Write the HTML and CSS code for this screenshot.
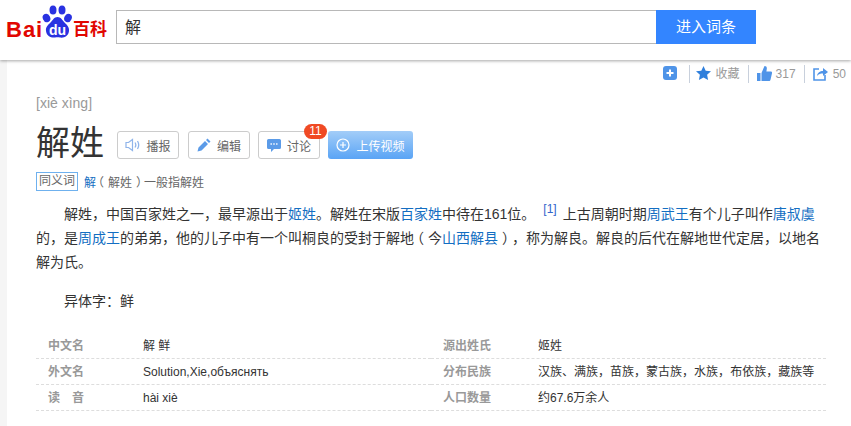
FILE: index.html
```html
<!DOCTYPE html>
<html lang="zh-CN">
<head>
  <meta charset="UTF-8">
  <title>解姓_百度百科</title>
  <link rel="stylesheet" href="styles.css">
</head>
<body>

<header class="top">
  <div class="logo">
    <span class="logo-bai">Bai</span>
    <span class="logo-paw">
      <svg width="32" height="34" viewBox="0 0 32 34">
        <ellipse cx="5.500" cy="13" rx="3.700" ry="4.300" fill="#2932e1" transform="rotate(-25 5.500 13)"/>
        <ellipse cx="12" cy="5" rx="3.500" ry="4.500" fill="#2932e1"/>
        <ellipse cx="21" cy="5" rx="3.500" ry="4.500" fill="#2932e1"/>
        <ellipse cx="27" cy="13" rx="3.700" ry="4.300" fill="#2932e1" transform="rotate(25 27 13)"/>
        <path d="M16.500 12c-3.500 0-4.500 3-7 5.500-2.500 2.500-5 4.500-4.500 8.500.5 5 5 7 9 6.500 2-.3 3.500-.3 5 0 4 .7 8.500-1.500 9-6.500.4-4-2-6-4.500-8.500-2.500-2.500-3.500-5.500-7-5.500z" fill="#2932e1"/>
      </svg>
      <span class="logo-du">du</span>
    </span>
    <span class="logo-baike">百科</span>
  </div>
  <form class="search">
    <div class="search-input">解</div>
    <div class="search-btn">进入词条</div>
  </form>
</header>

<div class="page">
  <main class="content">
    <div class="tools">
      <svg class="ico" width="14" height="14" viewBox="0 0 14 14"><rect width="14" height="14" rx="3" fill="#4f94e8"/><path d="M7 3.500v7M3.500 7h7" stroke="#fff" stroke-width="2"/></svg>
      <span class="sep sep-first"></span>
      <svg class="ico" width="15" height="14" viewBox="0 0 15 14"><path d="M7.500 0l2.200 4.700 5.300.6-3.900 3.500 1 5.200-4.600-2.600-4.600 2.600 1-5.200L0 5.300l5.300-.6z" fill="#2f7fdc"/></svg>
      <span class="tool-text">收藏</span>
      <span class="sep"></span>
      <svg class="ico ico-thumb" width="15" height="15" viewBox="0 0 15 15"><path d="M0 7h3.500v8H0zM4.500 7l3-7c1.700 0 2.500 1 2.300 2.700L9.400 5.500H14c1 0 1.200 1 1 1.800l-1.500 6.500c-.2.800-.7 1.200-1.500 1.200H4.500z" fill="#4f94e8"/></svg>
      <span class="tool-text">317</span>
      <span class="sep"></span>
      <svg class="ico" width="15" height="15" viewBox="0 0 15 15"><path d="M6 3H1v11h11V9" fill="none" stroke="#4f94e8" stroke-width="1.600"/><path d="M4 10c.5-3.500 3-5 6-5V2l5 4-5 4V7.500c-2.500 0-4.500.6-6 2.500z" fill="#4f94e8"/></svg>
      <span class="tool-text">50</span>
    </div>

    <div class="pinyin">[xiè xìng]</div>

    <div class="title-row">
      <h1>解姓</h1>
      <a class="btn">
        <svg width="15" height="14" viewBox="0 0 15 14"><path d="M1 4.500h2.500L7.500 1.500v11l-4-3H1z" fill="none" stroke="#8fb4ea" stroke-width="1.200"/><path d="M10 4.500c1 1.500 1 3.500 0 5M12.500 3c1.500 2.500 1.500 5.500 0 8" fill="none" stroke="#8fb4ea" stroke-width="1.300"/></svg>
        播报
      </a>
      <a class="btn">
        <svg width="14" height="14" viewBox="0 0 14 14"><path d="M0.500 13.500l1-4 6.500-6.500 3 3L4.500 12.500zM9 2l1.500-1.500 3 3L12 5z" fill="#5b9be8"/></svg>
        编辑
      </a>
      <a class="btn">
        <svg width="14" height="14" viewBox="0 0 14 14"><path d="M1.500 1h11A1.500 1.500 0 0 1 14 2.500v7a1.500 1.500 0 0 1-1.500 1.500H7l-3 3v-3H1.500A1.500 1.500 0 0 1 0 9.500v-7A1.500 1.500 0 0 1 1.500 1z" fill="#5b9be8"/><path d="M3.500 6h1.400M6.300 6h1.400M9.100 6h1.400" stroke="#fff" stroke-width="1.400"/></svg>
        讨论
        <span class="badge">11</span>
      </a>
      <a class="btn-upload">
        <svg width="14" height="14" viewBox="0 0 14 14"><circle cx="7" cy="7" r="6" fill="none" stroke="#fff" stroke-width="1.200"/><path d="M7 4v6M4 7h6" stroke="#fff" stroke-width="1.200"/></svg>
        上传视频
      </a>
    </div>

    <div class="synonym">
      <span class="syn-tag">同义词</span>
      <span class="syn-text"><a>解</a><span class="pl">（</span>解姓<span class="pr">）</span>一般指解姓</span>
    </div>

    <p class="para">解姓<span class="pc">，</span>中国百家姓之一<span class="pc">，</span>最早源出于<a>姬姓</a>。解姓在宋版<a>百家姓</a>中待在161位。<sup class="ref">[1]</sup>上古周朝时期<a>周武王</a>有个儿子叫作<a>唐叔虞</a>的<span class="pc">，</span>是<a>周成王</a>的弟弟<span class="pc">，</span>他的儿子中有一个叫桐良的受封于解地<span class="pl">（</span>今<a>山西解县</a><span class="pr">）</span><span class="pc">，</span>称为解良。解良的后代在解地世代定居<span class="pc">，</span>以地名解为氏。</p>
    <p class="para para-alt">异体字<span class="pc">：</span>鲜</p>

    <div class="basic-info">
      <dl class="info-col">
        <div class="info-row"><dt>中文名</dt><dd>解 鲜</dd></div>
        <div class="info-row"><dt>外文名</dt><dd>Solution,Xie,объяснять</dd></div>
        <div class="info-row"><dt>读　音</dt><dd>hài xiè</dd></div>
      </dl>
      <dl class="info-col">
        <div class="info-row"><dt>源出姓氏</dt><dd>姬姓</dd></div>
        <div class="info-row"><dt>分布民族</dt><dd>汉族、满族<span class="pc">，</span>苗族<span class="pc">，</span>蒙古族<span class="pc">，</span>水族<span class="pc">，</span>布依族<span class="pc">，</span>藏族等</dd></div>
        <div class="info-row"><dt>人口数量</dt><dd>约67.6万余人</dd></div>
      </dl>
    </div>
  </main>
</div>

</body>
</html>
```

FILE: styles.css
```css
* {
  box-sizing: border-box;
}
html, body {
  height: 100%;
}
body {
  margin: 0;
  font-family: "Liberation Sans", Arial, "Noto Sans CJK SC", sans-serif;
  font-size: 12px;
  color: #333;
  background: #fff;
  overflow: hidden;
  text-spacing-trim: space-all;
}
a {
  color: #136ec2;
  text-decoration: none;
}

/* header */
.top {
  position: relative;
  display: flex;
  height: 60px;
  padding: 10px 0 0 6px;
  background: #fff;
  box-shadow: 0 1px 3px rgba(0,0,0,0.35);
}
.logo {
  display: flex;
  align-items: flex-end;
  width: 110px;
  height: 29px;
  color: #e10601;
  white-space: nowrap;
}
.logo-bai {
  width: 35px;
  font-size: 22px;
  font-weight: bold;
  letter-spacing: 1px;
  line-height: 19px;
}
.logo-paw {
  position: relative;
  flex: none;
  width: 32px;
  height: 34px;
}
.logo-paw svg {
  display: block;
}
.logo-du {
  position: absolute;
  left: 6px;
  bottom: 0;
  width: 21px;
  font-size: 14px;
  font-weight: bold;
  line-height: 17px;
  text-align: center;
  color: #fff;
}
.logo-baike {
  font-size: 17px;
  font-weight: bold;
  line-height: 19px;
}
.search {
  display: flex;
  height: 34px;
}
.search-input {
  width: 540px;
  padding-left: 8px;
  border: 1px solid #b8b8b8;
  border-right: 0;
  font-size: 16px;
  line-height: 34px;
}
.search-btn {
  width: 100px;
  background: #3385ff;
  color: #fff;
  font-size: 15px;
  line-height: 34px;
  text-align: center;
}

/* page */
.page {
  height: calc(100% - 60px);
  padding-left: 7px;
  background: #f5f5f5;
}
.content {
  height: 100%;
  padding: 0 25px 0 29px;
  background: #fff;
}
.tools {
  display: flex;
  align-items: center;
  justify-content: flex-end;
  height: 26px;
  margin-right: -25px;
  padding-right: 5px;
  color: #999;
  font-size: 12px;
}
.tools .ico {
  margin-right: 5px;
}
.tools .ico-thumb {
  margin-right: 4px;
}
.tool-text {
  margin-top: 1px;
  line-height: 14px;
}
.sep {
  width: 1px;
  height: 18px;
  margin: 2px 8px 0;
  background: #c8d0dc;
}
.sep-first {
  margin-left: 7px;
  margin-right: 6px;
}
.pinyin {
  margin-top: 8px;
  color: #999;
  font-size: 14px;
  line-height: 18px;
}
.title-row {
  display: flex;
  align-items: center;
  margin-top: 11px;
  height: 44px;
}
h1 {
  margin: 0 13px 4px 0;
  font-size: 34px;
  font-weight: normal;
  line-height: 44px;
  color: #333;
}
.btn {
  position: relative;
  display: flex;
  align-items: center;
  justify-content: center;
  gap: 6px;
  width: 62px;
  height: 28px;
  margin-right: 8px;
  border: 1px solid #ccc;
  border-radius: 3px;
  color: #666;
  font-size: 12px;
}
.btn:first-of-type {
  margin-right: 9px;
}
.badge {
  position: absolute;
  top: -8px;
  right: -8px;
  width: 23px;
  height: 15px;
  border-radius: 8px;
  background: #f04a24;
  color: #fff;
  font-size: 12px;
  line-height: 15px;
  text-align: center;
}
.btn-upload {
  display: flex;
  align-items: center;
  justify-content: center;
  gap: 6px;
  width: 85px;
  height: 28px;
  border-radius: 3px;
  background: linear-gradient(#a3cdf8, #5aa4f5);
  color: #fff;
  font-size: 12px;
}
.synonym {
  display: flex;
  align-items: center;
  margin-top: 4px;
  height: 20px;
}
.syn-tag {
  width: 42px;
  height: 19px;
  margin-right: 6px;
  border: 1px solid #6fb1ee;
  color: #666;
  line-height: 17px;
  text-align: center;
}
.syn-text {
  color: #666;
}
.para {
  margin: 0;
  padding-top: 11px;
  width: 790px;
  font-size: 14px;
  line-height: 24px;
  text-indent: 28px;
}
.para-alt {
  padding-top: 15px;
}
/* punctuation sits in the middle of its cell, as in the source page */
.pc {
  font-family: "Noto Sans CJK TC", sans-serif;
  line-height: 0;
}
.pl {
  margin: 0 4px 0 -4px;
}
.pr {
  margin: 0 -4px 0 4px;
}
.ref {
  margin: 0 6px 0 8px;
  color: #3366cc;
  font-size: 12px;
  line-height: 0;
  vertical-align: 6px;
}

/* info table */
.basic-info {
  display: flex;
  width: 790px;
  margin-top: 20px;
}
.info-col {
  width: 395px;
  margin: 0;
}
.info-row {
  display: flex;
  height: 26px;
  padding: 1px 0 0 12px;
  border-bottom: 1px dashed #ddd;
  line-height: 25px;
}
.info-row dt {
  width: 95px;
  color: #999;
  font-weight: bold;
}
.info-row dd {
  margin: 0;
  color: #333;
}
```
